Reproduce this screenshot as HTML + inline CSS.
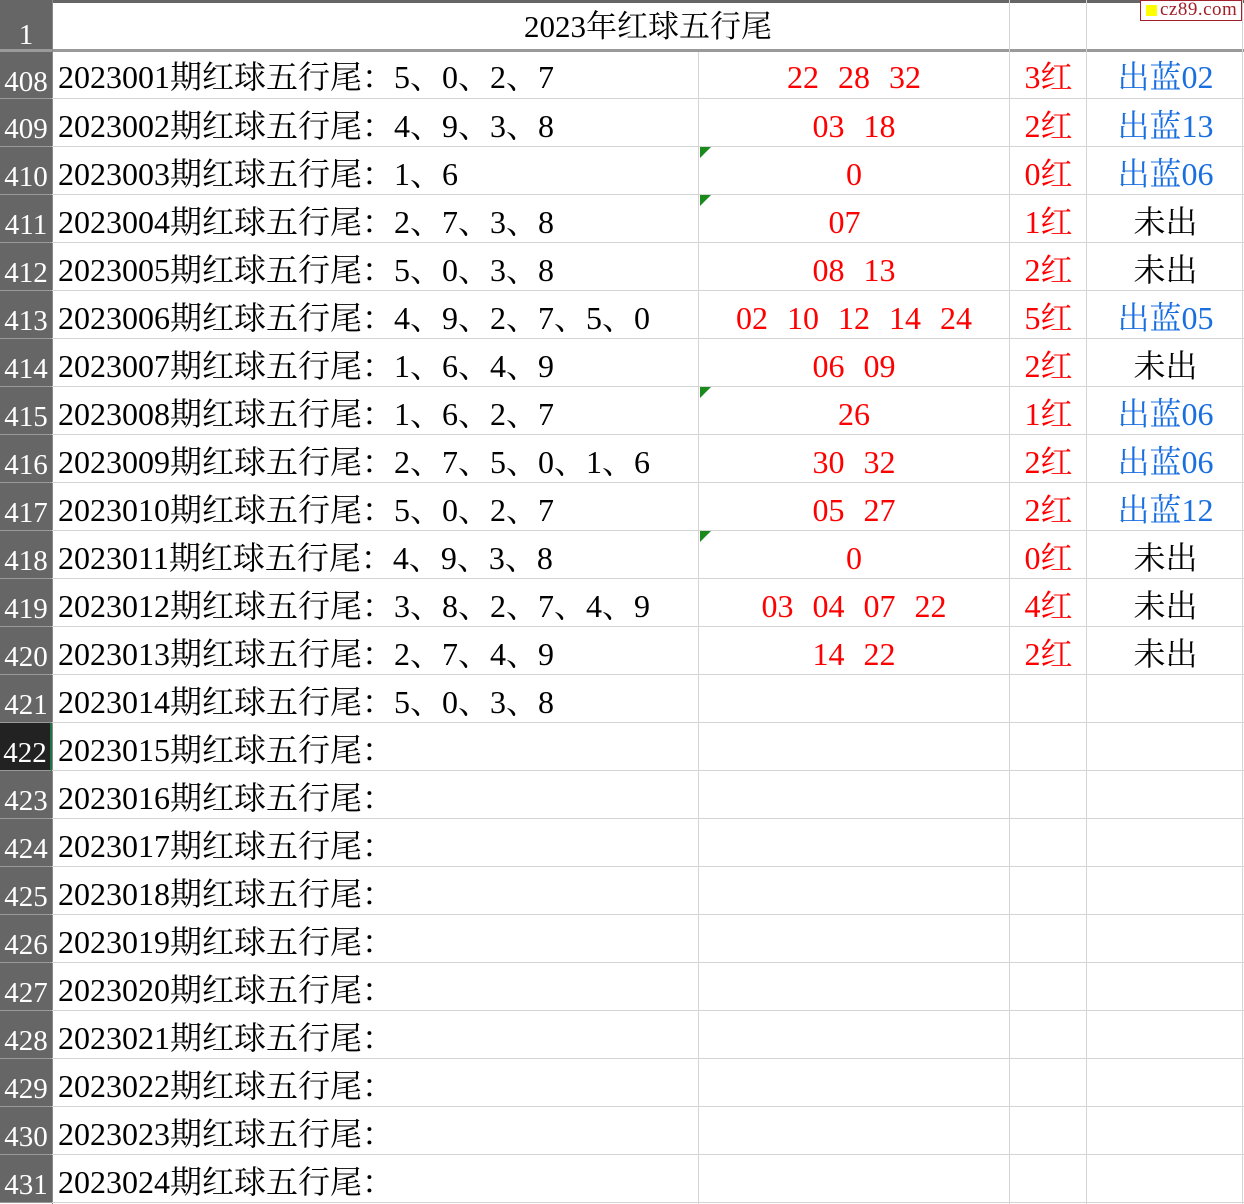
<!DOCTYPE html>
<html><head><meta charset="utf-8"><style>
html,body{margin:0;width:1244px;height:1204px;overflow:hidden;background:#fff;}
body{position:relative;font-family:"Liberation Serif","Noto Serif CJK SC",serif;}
.t{position:absolute;white-space:pre;font-size:32px;line-height:48px;top:3px}
.row{position:absolute;left:0;width:1244px;height:48px;border-bottom:1px solid #d4d4d4;box-sizing:border-box}
.rh{position:absolute;left:0;top:0;width:52px;height:48px;background:#666;color:#fff;font-size:29px;line-height:48px;text-align:center;border-bottom:1px solid #999;box-sizing:border-box}
.rh span{position:relative;top:6px}
.a{left:58px;color:#000}
.b{left:698px;width:312px;text-align:center;color:#f00;word-spacing:11px}
.c{left:1010px;width:77px;text-align:center;color:#f00}
.d{left:1087px;width:157px;text-align:center}
.bl{color:#1a6fe0}
.k{color:#000}
.v{position:absolute;top:0;height:1204px;width:1px;background:#d4d4d4}
.tri{position:absolute;left:700px;top:0;width:0;height:0;border-top:11px solid #1a8a1a;border-right:11px solid transparent}
</style></head><body>
<div style="position:absolute;left:0;top:0;width:1244px;height:3px;background:#666"></div>
<div style="position:absolute;left:0;top:3px;width:52px;height:47px;background:#666;color:#fff;font-size:29px;text-align:center;line-height:47px"><span style="position:relative;top:9px">1</span></div>
<div class="t" style="left:53px;width:1190px;text-align:center;top:3px;line-height:47px;font-size:31px">2023年红球五行尾</div>
<div style="position:absolute;left:0;top:49px;width:1244px;height:3px;background:#9a9a9a"></div>
<div class="v" style="left:698px;top:52px;height:1152px"></div>
<div class="v" style="left:1009px;top:0"></div>
<div class="v" style="left:1086px;top:0"></div>
<div class="v" style="left:1242px;top:0"></div>
<div style="position:absolute;left:52px;top:0;width:1px;height:1204px;background:#888"></div>

<div class="row" style="top:52px;height:47px"><div class="rh" style="height:47px"><span>408</span></div><div class="t a" style="top:1px">2023001期红球五行尾：5、0、2、7</div><div class="t b" style="top:1px">22 28 32</div><div class="t c" style="top:1px">3红</div><div class="t d bl" style="top:1px">出蓝02</div></div>
<div class="row" style="top:99px"><div class="rh"><span>409</span></div><div class="t a">2023002期红球五行尾：4、9、3、8</div><div class="t b">03 18</div><div class="t c">2红</div><div class="t d bl">出蓝13</div></div>
<div class="row" style="top:147px"><div class="tri"></div><div class="rh"><span>410</span></div><div class="t a">2023003期红球五行尾：1、6</div><div class="t b">0</div><div class="t c">0红</div><div class="t d bl">出蓝06</div></div>
<div class="row" style="top:195px"><div class="tri"></div><div class="rh"><span>411</span></div><div class="t a">2023004期红球五行尾：2、7、3、8</div><div class="t b">07 </div><div class="t c">1红</div><div class="t d k">未出</div></div>
<div class="row" style="top:243px"><div class="rh"><span>412</span></div><div class="t a">2023005期红球五行尾：5、0、3、8</div><div class="t b">08 13</div><div class="t c">2红</div><div class="t d k">未出</div></div>
<div class="row" style="top:291px"><div class="rh"><span>413</span></div><div class="t a">2023006期红球五行尾：4、9、2、7、5、0</div><div class="t b">02 10 12 14 24</div><div class="t c">5红</div><div class="t d bl">出蓝05</div></div>
<div class="row" style="top:339px"><div class="rh"><span>414</span></div><div class="t a">2023007期红球五行尾：1、6、4、9</div><div class="t b">06 09</div><div class="t c">2红</div><div class="t d k">未出</div></div>
<div class="row" style="top:387px"><div class="tri"></div><div class="rh"><span>415</span></div><div class="t a">2023008期红球五行尾：1、6、2、7</div><div class="t b">26</div><div class="t c">1红</div><div class="t d bl">出蓝06</div></div>
<div class="row" style="top:435px"><div class="rh"><span>416</span></div><div class="t a">2023009期红球五行尾：2、7、5、0、1、6</div><div class="t b">30 32</div><div class="t c">2红</div><div class="t d bl">出蓝06</div></div>
<div class="row" style="top:483px"><div class="rh"><span>417</span></div><div class="t a">2023010期红球五行尾：5、0、2、7</div><div class="t b">05 27</div><div class="t c">2红</div><div class="t d bl">出蓝12</div></div>
<div class="row" style="top:531px"><div class="tri"></div><div class="rh"><span>418</span></div><div class="t a">2023011期红球五行尾：4、9、3、8</div><div class="t b">0</div><div class="t c">0红</div><div class="t d k">未出</div></div>
<div class="row" style="top:579px"><div class="rh"><span>419</span></div><div class="t a">2023012期红球五行尾：3、8、2、7、4、9</div><div class="t b">03 04 07 22</div><div class="t c">4红</div><div class="t d k">未出</div></div>
<div class="row" style="top:627px"><div class="rh"><span>420</span></div><div class="t a">2023013期红球五行尾：2、7、4、9</div><div class="t b">14 22</div><div class="t c">2红</div><div class="t d k">未出</div></div>
<div class="row" style="top:675px"><div class="rh"><span>421</span></div><div class="t a">2023014期红球五行尾：5、0、3、8</div></div>
<div class="row" style="top:723px"><div class="rh" style="background:#222;border-right:2px solid #217346"><span>422</span></div><div class="t a">2023015期红球五行尾：</div></div>
<div class="row" style="top:771px"><div class="rh"><span>423</span></div><div class="t a">2023016期红球五行尾：</div></div>
<div class="row" style="top:819px"><div class="rh"><span>424</span></div><div class="t a">2023017期红球五行尾：</div></div>
<div class="row" style="top:867px"><div class="rh"><span>425</span></div><div class="t a">2023018期红球五行尾：</div></div>
<div class="row" style="top:915px"><div class="rh"><span>426</span></div><div class="t a">2023019期红球五行尾：</div></div>
<div class="row" style="top:963px"><div class="rh"><span>427</span></div><div class="t a">2023020期红球五行尾：</div></div>
<div class="row" style="top:1011px"><div class="rh"><span>428</span></div><div class="t a">2023021期红球五行尾：</div></div>
<div class="row" style="top:1059px"><div class="rh"><span>429</span></div><div class="t a">2023022期红球五行尾：</div></div>
<div class="row" style="top:1107px"><div class="rh"><span>430</span></div><div class="t a">2023023期红球五行尾：</div></div>
<div class="row" style="top:1155px"><div class="rh"><span>431</span></div><div class="t a">2023024期红球五行尾：</div></div>

<div style="position:absolute;left:1140px;top:0;width:102px;height:21px;border:1px solid #a0202a;background:#fff;box-sizing:border-box">
<div style="position:absolute;left:5px;top:4px;width:11px;height:11px;background:#ffff00"></div>
<div style="position:absolute;left:19px;top:-2px;font-size:19px;line-height:22px;color:#a0202a;font-family:'Liberation Serif',serif;letter-spacing:0.5px">cz89.com</div>
</div>
</body></html>
